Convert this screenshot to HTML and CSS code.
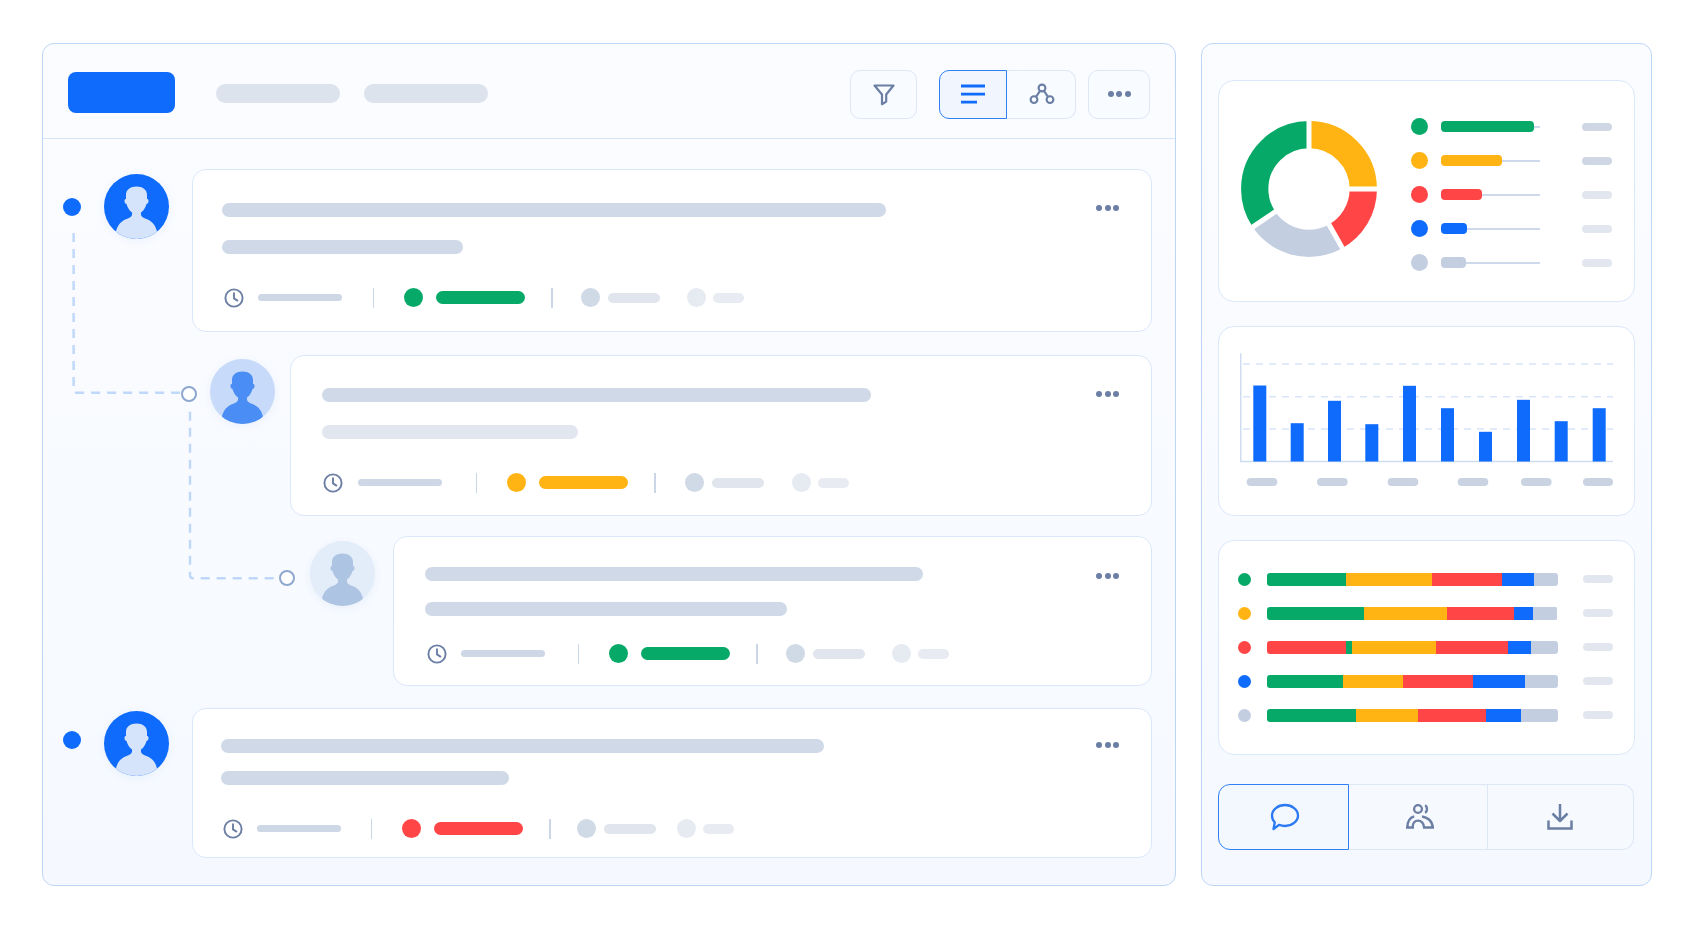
FILE: index.html
```html
<!DOCTYPE html>
<html lang="en">
<head>
<meta charset="utf-8">
<title>Dashboard</title>
<link rel="stylesheet" href="styles.css">
</head>
<body>
<svg class="defs" aria-hidden="true">
  <symbol id="person" viewBox="0 0 65 65">
    <path d="M11.5 60C13 50 18 46.5 24 44.5C27.5 43.3 28.5 41.5 28 38.5C24.5 36 23 32 22.5 30C21 29.5 20.5 28.5 20.5 27C20.5 25.5 21 25 22 25L22 21C22 15.5 26.5 12.5 32.5 12.5C38.5 12.5 43 15.5 43 21L43 25C44 25 44.5 25.5 44.5 27C44.5 28.5 44 29.5 42.5 30C42 32 40.5 36 37 38.5C36.5 41.5 37.5 43.3 41 44.5C47 46.5 52 50 53.5 60L53.5 70L11.5 70Z" fill="currentColor"/>
  </symbol>
  <symbol id="clock" viewBox="0 0 20 20">
    <circle cx="10" cy="10" r="8.6" fill="none" stroke="currentColor" stroke-width="1.9"/>
    <path d="M10 5.2V10.4L13.4 12.6" fill="none" stroke="currentColor" stroke-width="1.9" stroke-linecap="round" stroke-linejoin="round"/>
  </symbol>
</svg>

<main class="panel main">
  <svg class="links" width="300" height="600" viewBox="0 0 300 600" aria-hidden="true">
    <path d="M30.6 189V345.7Q30.6 348.7 33.6 348.7H137"/>
    <path d="M147 367.7V531.3Q147 534.3 150 534.3H235"/>
  </svg>

  <header class="topbar">
    <div class="logo"></div>
    <div class="nav-pill"></div>
    <div class="nav-pill"></div>
    <div class="tools">
      <button class="tool tool-filter" type="button" aria-label="Filter">
        <svg width="24" height="24" viewBox="0 0 24 24"><path d="M2.5 3.5H21.5L14.2 12.5V19.6L10 22.2V12.5Z" fill="none" stroke="#6b7ea3" stroke-width="2.2" stroke-linejoin="round"/></svg>
      </button>
      <div class="segment">
        <button class="tool seg-a" type="button" aria-label="List">
          <svg width="24" height="20" viewBox="0 0 24 20"><path d="M0 2H24M0 10.2H24M0 18.2H16" stroke="#0f6bfb" stroke-width="2.8" fill="none"/></svg>
        </button>
        <button class="tool seg-b" type="button" aria-label="Graph">
          <svg width="26" height="22" viewBox="0 0 26 22"><g fill="none" stroke="#6b7ea3" stroke-width="2.1"><circle cx="13" cy="5" r="3.4"/><circle cx="5" cy="16.6" r="3.4"/><circle cx="21" cy="16.6" r="3.4"/><path d="M11 7.8L7 13.8M15 7.8L19 13.8"/></g></svg>
        </button>
      </div>
      <button class="tool tool-more" type="button" aria-label="More"><span class="dots"><i></i><i></i><i></i></span></button>
    </div>
  </header>

  <div class="list">
    <article class="row lvl0">
      <span class="node solid"></span>
      <div class="avatar av-strong"><svg viewBox="0 0 65 65"><use href="#person"/></svg></div>
      <div class="card c1">
        <div class="line-row"><div class="sk sk-a" style="width:664px"></div><span class="dots"><i></i><i></i><i></i></span></div>
        <div class="sk sk-a line2" style="width:241px"></div>
        <div class="meta">
          <svg class="clock"><use href="#clock"/></svg>
          <span class="m-time"></span><span class="m-sep first"></span>
          <span class="m-dot green"></span><span class="m-bar green"></span><span class="m-sep second"></span>
          <span class="m-dot grey"></span><span class="m-grey"></span>
          <span class="m-dot pale"></span><span class="m-pale"></span>
        </div>
      </div>
    </article>

    <article class="row lvl1">
      <span class="node open"></span>
      <div class="avatar av-mid"><svg viewBox="0 0 65 65"><use href="#person"/></svg></div>
      <div class="card c2">
        <div class="line-row"><div class="sk sk-a" style="width:549px"></div><span class="dots"><i></i><i></i><i></i></span></div>
        <div class="sk sk-b line2" style="width:256px"></div>
        <div class="meta">
          <svg class="clock"><use href="#clock"/></svg>
          <span class="m-time"></span><span class="m-sep first"></span>
          <span class="m-dot yellow"></span><span class="m-bar yellow"></span><span class="m-sep second"></span>
          <span class="m-dot grey"></span><span class="m-grey"></span>
          <span class="m-dot pale"></span><span class="m-pale"></span>
        </div>
      </div>
    </article>

    <article class="row lvl2">
      <span class="node open"></span>
      <div class="avatar av-soft"><svg viewBox="0 0 65 65"><use href="#person"/></svg></div>
      <div class="card c3">
        <div class="line-row"><div class="sk sk-a" style="width:498px"></div><span class="dots"><i></i><i></i><i></i></span></div>
        <div class="sk sk-a line2" style="width:362px"></div>
        <div class="meta">
          <svg class="clock"><use href="#clock"/></svg>
          <span class="m-time"></span><span class="m-sep first"></span>
          <span class="m-dot green"></span><span class="m-bar green"></span><span class="m-sep second"></span>
          <span class="m-dot grey"></span><span class="m-grey"></span>
          <span class="m-dot pale"></span><span class="m-pale"></span>
        </div>
      </div>
    </article>

    <article class="row lvl0 last">
      <span class="node solid"></span>
      <div class="avatar av-strong"><svg viewBox="0 0 65 65"><use href="#person"/></svg></div>
      <div class="card c4">
        <div class="line-row"><div class="sk sk-a" style="width:603px"></div><span class="dots"><i></i><i></i><i></i></span></div>
        <div class="sk sk-a line2" style="width:288px"></div>
        <div class="meta">
          <svg class="clock"><use href="#clock"/></svg>
          <span class="m-time"></span><span class="m-sep first"></span>
          <span class="m-dot red"></span><span class="m-bar red"></span><span class="m-sep second"></span>
          <span class="m-dot grey"></span><span class="m-grey"></span>
          <span class="m-dot pale"></span><span class="m-pale"></span>
        </div>
      </div>
    </article>
  </div>
</main>

<aside class="panel side">
  <section class="box box-donut">
    <svg class="donut" width="136" height="136" viewBox="0 0 136 136" aria-hidden="true">
      <g fill="none" stroke-width="27.3" transform="rotate(-90 68 68)">
        <circle cx="68" cy="68" r="54.3" pathLength="360" stroke="#ffb413" stroke-dasharray="90 270"/>
        <circle cx="68" cy="68" r="54.3" pathLength="360" stroke="#ff4545" stroke-dasharray="62 298" stroke-dashoffset="-90"/>
        <circle cx="68" cy="68" r="54.3" pathLength="360" stroke="#c3cfe1" stroke-dasharray="84 276" stroke-dashoffset="-152"/>
        <circle cx="68" cy="68" r="54.3" pathLength="360" stroke="#07a968" stroke-dasharray="124 236" stroke-dashoffset="-236"/>
      </g>
      <g stroke="#fff" stroke-width="5">
        <path d="M68 68V-2"/>
        <path d="M68 68H138"/>
        <path d="M68 68L103 130.1"/>
        <path d="M68 68L9.6 107.4"/>
      </g>
    </svg>
    <div class="legend">
      <div class="leg"><span class="leg-dot green"></span><div class="track"><span class="fill green" style="width:93px"></span></div><span class="end"></span></div>
      <div class="leg"><span class="leg-dot yellow"></span><div class="track"><span class="fill yellow" style="width:61px"></span></div><span class="end"></span></div>
      <div class="leg"><span class="leg-dot red"></span><div class="track"><span class="fill red" style="width:41px"></span></div><span class="end light"></span></div>
      <div class="leg"><span class="leg-dot blue"></span><div class="track"><span class="fill blue" style="width:26px"></span></div><span class="end light"></span></div>
      <div class="leg"><span class="leg-dot grey2"></span><div class="track"><span class="fill grey2" style="width:25px"></span></div><span class="end light"></span></div>
    </div>
  </section>

  <section class="box box-chart">
    <svg class="chart" width="375" height="140" viewBox="0 0 375 140" aria-hidden="true">
      <g stroke="#d8e5fa" stroke-width="1.5" stroke-dasharray="7 6" fill="none">
        <path d="M3 14H373"/><path d="M3 46.7H373"/><path d="M3 79H373"/>
      </g>
      <path d="M0.7 3.3V111.5H373" fill="none" stroke="#cfdcef" stroke-width="1.5"/>
      <g fill="#0f6bfb">
        <rect x="13.3" y="35.5" width="13" height="76"/>
        <rect x="50.7" y="73.2" width="13" height="38.3"/>
        <rect x="88" y="50.8" width="13" height="60.7"/>
        <rect x="125.3" y="74.2" width="13" height="37.3"/>
        <rect x="163" y="35.8" width="13" height="75.7"/>
        <rect x="201" y="58.2" width="13" height="53.3"/>
        <rect x="239" y="81.8" width="13" height="29.7"/>
        <rect x="277" y="49.8" width="13" height="61.7"/>
        <rect x="314.7" y="71.2" width="13" height="40.3"/>
        <rect x="352.7" y="58.2" width="13" height="53.3"/>
      </g>
      <g fill="#c9d3e2">
        <rect x="6.7" y="128" width="30.6" height="8" rx="4"/>
        <rect x="77" y="128" width="30.6" height="8" rx="4"/>
        <rect x="147.7" y="128" width="30.6" height="8" rx="4"/>
        <rect x="217.7" y="128" width="30.6" height="8" rx="4"/>
        <rect x="281" y="128" width="30.6" height="8" rx="4"/>
        <rect x="343" y="128" width="30" height="8" rx="4"/>
      </g>
    </svg>
  </section>

  <section class="box box-stack">
    <div class="stack-row"><span class="s-dot green"></span>
      <div class="stack"><i class="green" style="flex-grow:239"></i><i class="yellow" style="flex-grow:257"></i><i class="red" style="flex-grow:212"></i><i class="blue" style="flex-grow:95"></i><i class="grey2" style="flex-grow:71"></i></div>
      <span class="end light"></span></div>
    <div class="stack-row"><span class="s-dot yellow"></span>
      <div class="stack"><i class="green" style="flex-grow:291"></i><i class="yellow" style="flex-grow:251"></i><i class="red" style="flex-grow:202"></i><i class="blue" style="flex-grow:55"></i><i class="grey2" style="flex-grow:75"></i></div>
      <span class="end light"></span></div>
    <div class="stack-row"><span class="s-dot red"></span>
      <div class="stack"><i class="red" style="flex-grow:238"></i><i class="green" style="flex-grow:18"></i><i class="yellow" style="flex-grow:253"></i><i class="red" style="flex-grow:216"></i><i class="blue" style="flex-grow:68"></i><i class="grey2" style="flex-grow:81"></i></div>
      <span class="end light"></span></div>
    <div class="stack-row"><span class="s-dot blue"></span>
      <div class="stack"><i class="green" style="flex-grow:228"></i><i class="yellow" style="flex-grow:180"></i><i class="red" style="flex-grow:212"></i><i class="blue" style="flex-grow:156"></i><i class="grey2" style="flex-grow:98"></i></div>
      <span class="end light"></span></div>
    <div class="stack-row"><span class="s-dot grey2"></span>
      <div class="stack"><i class="green" style="flex-grow:267"></i><i class="yellow" style="flex-grow:188"></i><i class="red" style="flex-grow:203"></i><i class="blue" style="flex-grow:105"></i><i class="grey2" style="flex-grow:111"></i></div>
      <span class="end light"></span></div>
  </section>

  <nav class="tabs">
    <button class="tab tab-chat" type="button" aria-label="Comments">
      <svg width="30" height="28" viewBox="0 0 30 28"><path d="M15 2C22 2 28 6.6 28 12.5C28 18.4 22 23 15 23C12.8 23 10.8 22.6 9 21.8L3.5 26L4.8 19.3C2.9 17.5 2 15.2 2 12.5C2 6.6 8 2 15 2Z" fill="none" stroke="#2b79f3" stroke-width="2.3" stroke-linejoin="round"/></svg>
    </button>
    <button class="tab tab-users" type="button" aria-label="People">
      <svg width="28" height="25" viewBox="0 0 28 25"><g fill="none" stroke="#6b7ea3"><circle cx="12" cy="5" r="3.9" stroke-width="2.3"/><path d="M19 1.4C21.6 2.4 21.6 7.6 19 8.8" stroke-width="2.3"/><path d="M1.4 23.5C1.4 17.4 4 13.6 8.2 12.4" stroke-width="2.5"/><path d="M6.6 23.5C6.6 19 9 16.6 12 16.6C15 16.6 18 19 18 23.5" stroke-width="2.3"/><path d="M16 12.4C20.5 13 26.6 16.4 26.6 23.5" stroke-width="2.5"/><path d="M0 23.5H8M17 23.5H28" stroke-width="2.6"/></g></svg>
    </button>
    <button class="tab tab-down" type="button" aria-label="Download">
      <svg width="26" height="28" viewBox="0 0 26 28"><g fill="none" stroke="#6b7ea3" stroke-width="2.5"><path d="M13 1V17.5"/><path d="M5.5 10.5L13 18L20.5 10.5" stroke-linejoin="round"/><path d="M1.5 17.5V25.5H24.5V17.5"/></g></svg>
    </button>
  </nav>
</aside>
</body>
</html>
```

FILE: styles.css
```css
* { box-sizing: border-box; }

html, body { margin: 0; height: 100%; }

body {
  background: #fff;
  display: flex;
  gap: 25px;
  padding: 43px 0 0 42px;
  overflow: hidden;
}

.defs { position: absolute; width: 0; height: 0; }

.green { background: #07a968; }
.yellow { background: #ffb413; }
.red { background: #ff4545; }
.blue { background: #0f6bfb; }
.grey { background: #d0d9e6; }
.pale { background: #e6eaf1; }
.grey2 { background: #c3cfe1; }

.panel {
  height: 843px;
  background: linear-gradient(180deg, #fbfcff 0%, #f5f9ff 100%);
  border: 1.5px solid #bdd6f6;
  border-radius: 12px;
}

.main { position: relative; width: 1134px; flex: none; }

.links { position: absolute; left: 0; top: 0; pointer-events: none; }
.links path { fill: none; stroke: #bfd7f8; stroke-width: 2.4; stroke-dasharray: 9 7; }

/* top bar */
.topbar {
  height: 95px;
  display: flex;
  align-items: center;
  padding: 0 25px 0 24.5px;
  border-bottom: 1.5px solid #d6e5fa;
}

.logo { width: 107px; height: 41px; border-radius: 8px; background: #0f6bfb; margin: 2.4px 17px 0 0; }

.nav-pill { width: 124px; height: 19px; border-radius: 10px; background: #dde3ed; margin: 4.4px 0 0 24px; }

.tools { margin-left: auto; display: flex; align-items: center; margin-top: 6.6px; }

.tool {
  height: 49px;
  padding: 0;
  display: flex;
  align-items: center;
  justify-content: center;
  background: #f8fbff;
  border: 1.5px solid #dfe7f4;
  border-radius: 10px;
}

.tool-filter { width: 67px; margin-right: 22px; }
.tool-more { width: 62px; margin-left: 12px; }

.segment { display: flex; }
.seg-a { width: 68px; background: #f1f6fe; border: 1.5px solid #2f80f6; border-radius: 10px 0 0 10px; }
.seg-b { width: 69px; padding-left: 2px; border-left: 0; border-radius: 0 10px 10px 0; }

.dots { display: flex; gap: 2.5px; }
.dots i { width: 6px; height: 6px; border-radius: 50%; background: #6b7ea3; }

/* timeline list */
.list {
  display: flex;
  flex-direction: column;
  gap: 23px;
  padding: 30px 23px 0 0;
}

.row { display: flex; align-items: flex-start; }

.lvl0 { padding-left: 19.5px; }
.lvl1 { padding-left: 137.5px; }
.lvl2 { padding-left: 235.5px; margin-top: -2.5px; }
.last { margin-top: -1px; }

.node { position: relative; flex: none; border-radius: 50%; }
.solid { width: 18px; height: 18px; margin: 29px 23.5px 0 0; background: #0f6bfb; }
.last .solid { margin-top: 23px; }
.open { width: 16px; height: 16px; background: #fff; border: 2.5px solid #8ea7cf; }
.lvl1 .open { margin: 30.5px 13px 0 0; }
.lvl2 .open { margin: 34px 15px 0 0; }

.avatar {
  width: 65px;
  height: 65px;
  flex: none;
  margin-top: 5px;
  border-radius: 50%;
  overflow: hidden;
  box-shadow: 0 2px 8px rgba(60, 110, 200, .07);
}
.lvl1 .avatar { margin-top: 4px; }
.last .avatar { margin-top: 3px; }
.avatar svg { display: block; width: 65px; height: 65px; }
.av-strong { background: #0f6bfb; color: #d6e4fb; }
.av-mid { background: #c7daf9; color: #4a8df5; }
.av-soft { background: #e3ecf9; color: #adc4e3; }

.lvl0 .avatar { margin-right: 23px; }
.lvl1 .avatar { margin-right: 15.5px; }
.lvl2 .avatar { margin-right: 18.5px; }

/* cards */
.card {
  flex: 1;
  background: #fff;
  border: 1.5px solid #dbe8fb;
  border-radius: 14px;
  padding: var(--pt) 32px 0 var(--pl);
  height: var(--h);
  --cl: 2px;
  --tm: 14px;
  --dm: -3px;
  --g2: 28.5px;
  --g3: 27px;
}

.c1 { --h: 163px; --pt: 32.5px; --pl: 28.5px; --lg: 23px; --mg: 34px; --sep: 31px; }
.c2 { --h: 160.5px; --pt: 31.5px; --pl: 30.5px; --lg: 23.5px; --mg: 33.5px; --sep: 34px; --cl: 1px; --tm: 15px; --dm: -1px; --g2: 29.5px; --g3: 28px; }
.c3 { --h: 150px; --pt: 29.5px; --pl: 31px; --lg: 21px; --mg: 28px; --sep: 32.5px; --dm: 5.4px; }
.c4 { --h: 150px; --pt: 29.5px; --pl: 27.5px; --lg: 18.5px; --mg: 33.5px; --sep: 30px; --g2: 26px; --g3: 21.5px; --dm: -1px; }

.sk { height: 14px; border-radius: 7px; }
.sk-a { background: #d0d9e7; }
.sk-b { background: #e2e6ef; }
.line-row { display: flex; align-items: center; justify-content: space-between; }
.line-row .dots { margin-top: var(--dm); }
.line2 { margin-top: var(--lg); }

.meta { display: flex; align-items: center; height: 20px; margin-top: var(--mg); }
.clock { width: 20px; height: 20px; flex: none; color: #6b7ea3; margin-left: var(--cl); }
.m-time { width: 84px; height: 7px; border-radius: 4px; background: #cdd7e6; margin-left: var(--tm); }
.m-sep { width: 1.5px; height: 20px; background: #cbd6e7; }
.m-sep.first { margin-left: var(--sep); }
.m-sep.second { margin-left: 26px; }
.m-dot { width: 19px; height: 19px; border-radius: 50%; margin-left: 30px; flex: none; }
.m-sep.second + .m-dot { margin-left: var(--g2); }
.m-dot.pale { margin-left: var(--g3); }
.m-bar { width: 89px; height: 13px; border-radius: 7px; margin-left: 13px; }
.m-grey { width: 52px; height: 10px; border-radius: 5px; background: #e0e5ee; margin-left: 8px; }
.m-pale { width: 31px; height: 10px; border-radius: 5px; background: #e8ebf2; margin-left: 7px; }

/* side column */
.side {
  width: 451px;
  flex: none;
  padding: 36px 16.5px 0 15.5px;
  display: flex;
  flex-direction: column;
}

.box {
  background: #fff;
  border: 1.5px solid #dbe8fb;
  border-radius: 16px;
}

.box-donut {
  height: 222px;
  display: flex;
  align-items: flex-start;
  padding: 37px 0 0 22px;
  margin-bottom: 24px;
}

.donut { flex: none; margin: 3px 34px 0 0; display: block; overflow: hidden; }

.legend { display: flex; flex-direction: column; gap: 17px; }
.leg { display: flex; align-items: center; height: 17px; }
.leg-dot { width: 17px; height: 17px; border-radius: 50%; flex: none; margin-right: 13px; }

.track {
  position: relative;
  width: 99.5px;
  height: 11px;
  display: flex;
  align-items: center;
}
.track::before {
  content: "";
  position: absolute;
  left: 0;
  right: 0;
  top: 4.5px;
  height: 2px;
  background: #cddaec;
}
.fill { position: relative; height: 11px; border-radius: 4px; }

.end { width: 30px; height: 8px; border-radius: 4px; background: #cfd7e4; margin-left: 42px; flex: none; }
.end.light { background: #e2e6ef; }

.box-chart { height: 190px; padding: 23px 0 0 21px; margin-bottom: 23.5px; }
.chart { display: block; }

.box-stack {
  height: 215px;
  padding: 32px 0 0 19.5px;
  margin-bottom: 29px;
  display: flex;
  flex-direction: column;
  gap: 21.1px;
}
.stack-row { display: flex; align-items: center; height: 13px; }
.s-dot { width: 13px; height: 13px; border-radius: 50%; flex: none; margin-right: 16px; }
.stack { width: 290.5px; height: 13px; display: flex; border-radius: 3px; overflow: hidden; }
.stack i { display: block; flex: 1 1 0; }
.stack-row .end { margin-left: 25px; }

.tabs { display: flex; height: 66px; }

.tab {
  height: 66px;
  padding: 0;
  display: flex;
  align-items: center;
  justify-content: center;
  background: #f6f9fe;
  border: 1.5px solid #dde7f6;
}

.tab-chat { width: 131px; padding-left: 3px; background: #f3f8ff; border: 1.5px solid #2f80f6; border-radius: 12px 0 0 12px; }
.tab-users { width: 139.5px; padding-left: 5px; border-left: 0; border-right-width: 1.5px; }
.tab-down { width: 146px; padding-right: 2px; border-left: 0; border-radius: 0 12px 12px 0; }
```
